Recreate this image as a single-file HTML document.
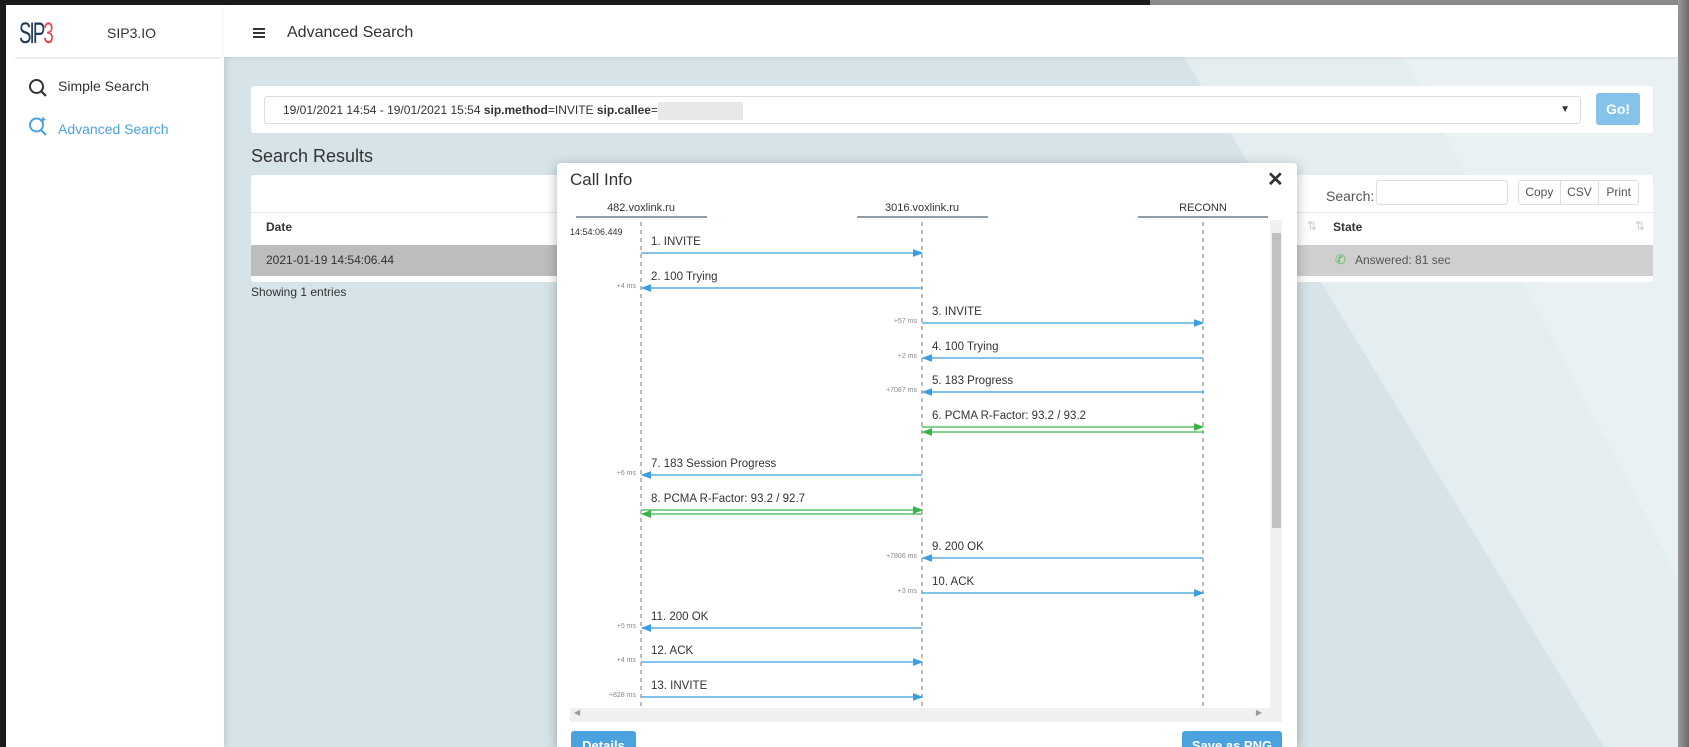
<!DOCTYPE html>
<html><head><meta charset="utf-8"><style>
*{margin:0;padding:0;box-sizing:border-box}
html{width:1689px;height:747px;overflow:hidden}
body{width:1689px;height:747px;overflow:hidden;position:relative;background:#1b1b1b;font-family:"Liberation Sans",sans-serif;color:#333}
.a{position:absolute}
</style></head><body>
<div class="a" style="left:1150px;top:0;width:539px;height:6px;background:#8a8a8a"></div>
<div class="a" style="left:1678px;top:0;width:11px;height:747px;background:linear-gradient(90deg,#9a9a9a,#6a6a6a)"></div>
<!-- main bg -->
<div class="a" style="left:224px;top:57px;width:1454px;height:690px;background:#d6e4e9;overflow:hidden">
 <svg width="1454" height="690" class="a" style="left:0;top:0"><polygon points="960,0 1454,0 1454,690 1380,690" fill="#e4edf0"/><polygon points="1180,0 1454,0 1454,520" fill="#eaf1f3"/></svg>
</div>
<!-- sidebar -->
<div class="a" style="left:6px;top:5px;width:218px;height:742px;background:#fff;box-shadow:2px 0 6px rgba(0,0,0,.12)">
 <div class="a" style="left:13px;top:12px;font-size:30px;letter-spacing:-3px;transform:scaleX(.62);transform-origin:left;font-weight:300"><span style="color:#1e3a55">SIP</span><span style="color:#e8454f">3</span></div>
 <div class="a" style="left:101px;top:20px;font-size:14px;color:#333">SIP3.IO</div>
 <div class="a" style="left:9px;top:52px;width:206px;height:2px;background:#eee"></div>
 <svg class="a" style="left:22px;top:73px" width="20" height="20"><circle cx="8.5" cy="8.5" r="6.5" fill="none" stroke="#333" stroke-width="2"/><line x1="13" y1="13" x2="18" y2="18" stroke="#333" stroke-width="2.2"/></svg>
 <div class="a" style="left:52px;top:73px;font-size:14px;color:#333">Simple Search</div>
 <svg class="a" style="left:22px;top:111px" width="20" height="20"><circle cx="8.5" cy="9" r="6.5" fill="none" stroke="#4aa3df" stroke-width="2"/><line x1="13" y1="14" x2="18" y2="19" stroke="#4aa3df" stroke-width="2"/><line x1="15" y1="1" x2="15" y2="6" stroke="#4aa3df" stroke-width="1.5"/><line x1="12.5" y1="3.5" x2="17.5" y2="3.5" stroke="#4aa3df" stroke-width="1.5"/></svg>
 <div class="a" style="left:52px;top:116px;font-size:14px;color:#4aa3df">Advanced Search</div>
</div>
<!-- header -->
<div class="a" style="left:224px;top:5px;width:1454px;height:52px;background:#fff;box-shadow:0 1px 4px rgba(0,0,0,.08)">
 <div class="a" style="left:29px;top:23px;width:12px;height:2px;background:#333;box-shadow:0 4px 0 #333,0 8px 0 #333"></div>
 <div class="a" style="left:63px;top:19px;font-size:16px;color:#333">Advanced Search</div>
</div>
<!-- search card -->
<div class="a" style="left:251px;top:86px;width:1402px;height:47px;background:#fff;border-radius:3px">
 <div class="a" style="left:13px;top:10px;width:1317px;height:28px;border:1px solid #ddd;border-radius:3px;font-size:12px;line-height:26px;padding-left:18px;color:#333">19/01/2021 14:54 - 19/01/2021 15:54 <b>sip.method</b>=INVITE <b>sip.callee</b>=<span style="display:inline-block;width:85px;height:18px;background:#e8e8e8;vertical-align:middle"></span>
  <span class="a" style="right:10px;top:0;font-size:10px">▼</span></div>
 <div class="a" style="left:1345px;top:7px;width:44px;height:32px;background:#86c3ea;border-radius:3px;color:#fff;font-size:14px;font-weight:bold;text-align:center;line-height:32px">Go!</div>
</div>
<div class="a" style="left:251px;top:146px;font-size:18px;color:#333">Search Results</div>
<!-- table card -->
<div class="a" style="left:251px;top:175px;width:1402px;height:107px;background:#fff;border-radius:3px">
 <div class="a" style="left:0;top:37px;width:1402px;height:1px;background:#e8e8e8"></div>
 <div class="a" style="left:15px;top:45px;font-size:12px;font-weight:bold">Date</div>
 <div class="a" style="left:0;top:70px;width:1402px;height:31px;background:#bdbdbd"></div>
 <div class="a" style="left:1046px;top:70px;width:356px;height:31px;background:#cfcfcf"></div>
 <div class="a" style="left:15px;top:78px;font-size:12px">2021-01-19 14:54:06.44</div>
 <div class="a" style="left:1075px;top:13px;font-size:14px;color:#555">Search:</div>
 <div class="a" style="left:1125px;top:5px;width:132px;height:25px;border:1px solid #ddd;border-radius:3px"></div>
 <div class="a" style="left:1267px;top:5px;width:121px;height:25px;border:1px solid #ddd;border-radius:3px;font-size:12px;color:#555;display:flex">
  <span style="width:42px;text-align:center;line-height:23px;border-right:1px solid #ddd">Copy</span><span style="width:39px;text-align:center;line-height:23px;border-right:1px solid #ddd">CSV</span><span style="width:39px;text-align:center;line-height:23px">Print</span></div>
 <div class="a" style="left:1056px;top:44px;font-size:12px;color:#ccc">⇅</div>
 <div class="a" style="left:1082px;top:45px;font-size:12px;font-weight:bold">State</div>
 <div class="a" style="left:1384px;top:44px;font-size:12px;color:#ccc">⇅</div>
 <div class="a" style="left:1084px;top:77px;font-size:13px;color:#5cb85c">✆</div>
 <div class="a" style="left:1104px;top:78px;font-size:12px;color:#555">Answered: 81 sec</div>
</div>
<div class="a" style="left:251px;top:285px;font-size:12px;color:#333">Showing 1 entries</div>
<!-- modal -->
<div class="a" style="left:557px;top:163px;width:740px;height:584px;background:#fff;border-radius:4px 4px 0 0;box-shadow:0 3px 12px rgba(0,0,0,.3);overflow:hidden">
 <div class="a" style="left:13px;top:7px;font-size:17px;color:#333">Call Info</div>
 <div class="a" style="left:710px;top:4px;font-size:20px;font-weight:bold;color:#333">✕</div>
 <div class="a" style="left:13px;top:545px;width:700px;height:14px;background:#f0f0f0"><span class="a" style="left:4px;top:0;font-size:8px;color:#999">◀</span><span class="a" style="right:8px;top:0;font-size:8px;color:#999">▶</span></div>
 <div class="a" style="left:713px;top:57px;width:12px;height:502px;background:#f0f0f0"></div>
 <div class="a" style="left:715px;top:70px;width:9px;height:295px;background:#c1c1c1"></div>
 <div class="a" style="left:14px;top:568px;width:65px;height:30px;background:#4aa3df;border-radius:3px;color:#fff;font-size:13px;font-weight:bold;text-align:center;line-height:30px">Details</div>
 <div class="a" style="left:625px;top:568px;width:100px;height:30px;background:#4aa3df;border-radius:3px;color:#fff;font-size:13px;font-weight:bold;text-align:center;line-height:30px">Save as PNG</div>
</div>
<svg class="a" style="left:0;top:0" width="1689" height="747" font-family="Liberation Sans, sans-serif">
 <defs>
  <marker id="b" markerWidth="8" markerHeight="6" refX="7" refY="3" orient="auto"><path d="M0,0 L8,3 L0,6z" fill="#3a9ee0"/></marker>
  <marker id="g" markerWidth="8" markerHeight="6" refX="7" refY="3" orient="auto"><path d="M0,0 L8,3 L0,6z" fill="#3cb34a"/></marker>
 </defs>
 <g font-size="11" fill="#333" text-anchor="middle"><text x="641" y="211">482.voxlink.ru</text><text x="922" y="211">3016.voxlink.ru</text><text x="1203" y="211">RECONN</text></g>
 <g stroke="#6b7c88" stroke-width="1.5"><line x1="576" y1="217" x2="707" y2="217"/><line x1="857" y1="217" x2="988" y2="217"/><line x1="1138" y1="217" x2="1268" y2="217"/></g>
 <g stroke="#777" stroke-dasharray="4,4"><line x1="641" y1="222" x2="641" y2="707"/><line x1="922" y1="222" x2="922" y2="707"/><line x1="1203" y1="222" x2="1203" y2="707"/></g>
 <text x="570" y="235" font-size="9" fill="#333">14:54:06.449</text>
 <g stroke="#3a9ee0" stroke-width="1.3" marker-end="url(#b)">
  <line x1="641" y1="253" x2="922" y2="253"/><line x1="922" y1="288" x2="642" y2="288"/><line x1="922" y1="323" x2="1203" y2="323"/><line x1="1203" y1="358" x2="923" y2="358"/><line x1="1203" y1="392" x2="923" y2="392"/><line x1="922" y1="475" x2="642" y2="475"/><line x1="1203" y1="558" x2="923" y2="558"/><line x1="922" y1="593" x2="1203" y2="593"/><line x1="922" y1="628" x2="642" y2="628"/><line x1="641" y1="662" x2="922" y2="662"/><line x1="641" y1="697" x2="922" y2="697"/>
 </g>
 <g stroke="#3cb34a" stroke-width="1.3" marker-end="url(#g)">
  <line x1="922" y1="427" x2="1203" y2="427"/><line x1="1203" y1="432" x2="923" y2="432"/><line x1="641" y1="510" x2="922" y2="510"/><line x1="922" y1="514" x2="642" y2="514"/>
 </g>
 <g font-size="11.5" fill="#333">
  <text x="651" y="245">1. INVITE</text><text x="651" y="280">2. 100 Trying</text><text x="932" y="315">3. INVITE</text><text x="932" y="350">4. 100 Trying</text><text x="932" y="384">5. 183 Progress</text><text x="932" y="419">6. PCMA R-Factor: 93.2 / 93.2</text><text x="651" y="467">7. 183 Session Progress</text><text x="651" y="502">8. PCMA R-Factor: 93.2 / 92.7</text><text x="932" y="550">9. 200 OK</text><text x="932" y="585">10. ACK</text><text x="651" y="620">11. 200 OK</text><text x="651" y="654">12. ACK</text><text x="651" y="689">13. INVITE</text>
 </g>
 <g font-size="7" fill="#888" text-anchor="end">
  <text x="636" y="288">+4 ms</text><text x="917" y="323">+57 ms</text><text x="917" y="358">+2 ms</text><text x="917" y="392">+7087 ms</text><text x="636" y="475">+6 ms</text><text x="917" y="558">+7806 ms</text><text x="917" y="593">+3 ms</text><text x="636" y="628">+5 ms</text><text x="636" y="662">+4 ms</text><text x="636" y="697">+828 ms</text>
 </g>
</svg>
</body></html>
